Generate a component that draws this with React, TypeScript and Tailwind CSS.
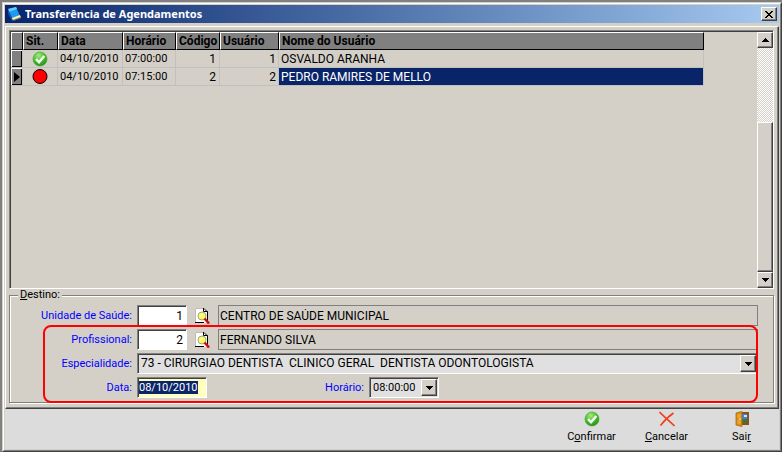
import { useEffect, useRef } from "react";
import type { ReactNode } from "react";

const columns = [
  { label: "Sit.", width: "w-[35px]" },
  { label: "Data", width: "w-[65px]" },
  { label: "Horário", width: "w-[53px]" },
  { label: "Código", width: "w-[44px]" },
  { label: "Usuário", width: "w-[59px]" },
  { label: "Nome do Usuário", width: "w-[425px]" },
];

const appointments = [
  { status: "ok", date: "04/10/2010", time: "07:00:00", code: 1, user: 1, name: "OSVALDO ARANHA", current: false },
  { status: "busy", date: "04/10/2010", time: "07:15:00", code: 2, user: 2, name: "PEDRO RAMIRES DE MELLO", current: true },
];

const raised = "border border-t-white border-l-white border-r-[#404040] border-b-[#404040] shadow-[inset_-1px_-1px_0_#808080] bg-[#d4d0c8]";
const sunken = "border border-t-[#808080] border-l-[#808080] border-r-white border-b-white shadow-[inset_1px_1px_0_#404040]";
const labelText = "w-[122px] shrink-0 text-right text-[#0000ff]";

const BookIcon = () => (
  <svg width="16" height="16" viewBox="0 0 16 16" aria-hidden="true">
    <path d="M1 3 9 1l4 9-8 3z" fill="#1c9cf0" />
    <path d="M1 3 9 1l1 2-8 3z" fill="#6cc8ff" />
    <path d="m1 3 4 9v3L1 8z" fill="#0b50b8" />
    <path d="m5 12 8-3 1 3-8 3z" fill="#fff3b0" />
    <path d="m6 14 8-3" stroke="#e8b820" />
    <path d="m5 15 9-3" stroke="#0b50b8" />
  </svg>
);

const CheckIcon = () => (
  <svg width="16" height="16" viewBox="0 0 16 16" aria-hidden="true">
    <defs>
      <radialGradient id="green" cx="40%" cy="25%" r="75%">
        <stop offset="0" stopColor="#a4ea80" />
        <stop offset=".55" stopColor="#4cc02c" />
        <stop offset="1" stopColor="#24941c" />
      </radialGradient>
    </defs>
    <circle cx="8" cy="8" r="7" fill="url(#green)" stroke="#3aa52a" strokeWidth=".6" />
    <path d="m4 8 3 3.2L12.3 5" fill="none" stroke="#fff" strokeWidth="2.4" />
  </svg>
);

const BusyIcon = () => (
  <svg width="16" height="16" viewBox="0 0 16 16" aria-hidden="true">
    <circle cx="8" cy="7.5" r="7" fill="#f00" stroke="#000" />
  </svg>
);

const CrossIcon = () => (
  <svg width="16" height="16" viewBox="0 0 16 16" aria-hidden="true">
    <path d="M.5 1 8 8.2l7.500 6.800" fill="none" stroke="#f04020" strokeWidth="1.6" />
    <path d="M14.500 2C10 5 5 10 1.500 14.500" fill="none" stroke="#f04020" strokeWidth="1.6" />
  </svg>
);

const DoorIcon = () => (
  <svg width="16" height="16" viewBox="0 0 16 16" aria-hidden="true">
    <path d="M5 1h10v13H5z" fill="#8a5020" />
    <path d="M8 3h5v5H8z" fill="#3a80f0" />
    <path d="M10 4h3v2h-3z" fill="#cfe4ff" />
    <path d="M8 8h5v4H8z" fill="#3a7a30" />
    <path d="m2 2 6-1.500v15L2 14z" fill="#d89018" stroke="#a86810" strokeWidth=".8" />
    <path d="m3.500 3.500 3-.8v4l-3 .3zM3.500 9l3 .2v4l-3-.7z" fill="#e8a838" />
    <circle cx="6" cy="8" r=".8" fill="#fff" />
  </svg>
);

const LookupIcon = () => (
  <svg width="16" height="16" viewBox="0 0 16 16" aria-hidden="true">
    <path d="M1 0h9l4 4v11H1z" fill="#fff" />
    <path d="M1.500 15V.5H10" fill="none" stroke="#c0bcb4" />
    <path d="M9.500 0v3.500h4V15M10 .5l3.500 3.500M1 14.500h9" fill="none" stroke="#000" />
    <circle cx="8" cy="8" r="4" fill="#ffff40" stroke="#a0a0a0" />
    <path d="M6 8.500 8.500 6" stroke="#fff" strokeWidth="1.500" />
    <path d="m10.500 10.500 4.500 5" stroke="#d01010" strokeWidth="2.600" />
  </svg>
);

const Arrow = ({ up = false }: { up?: boolean }) => (
  <svg width="7" height="4" viewBox="0 0 7 4" shapeRendering="crispEdges" aria-hidden="true">
    <path d={up ? "M3 0h1v1h1v1h1v1h1v1H0V3h1V2h1V1h1z" : "M0 0h7v1H6v1H5v1H4v1H3V3H2V2H1V1H0z"} />
  </svg>
);

function ComboBox({ id, value, className }: { id: string; value: string; className: string }) {
  return (
    <div className={`relative h-[21px] ${className}`}>
      <select id={id} className={`${sunken} block h-full w-full appearance-none bg-[#e0e0e0] pl-[3px] whitespace-pre outline-none`}>
        <option>{value}</option>
      </select>
      <span className={`${raised} pointer-events-none absolute top-[2px] right-[2px] bottom-[2px] flex w-4 items-center justify-center`}>
        <Arrow />
      </span>
    </div>
  );
}

function LookupRow({ id, label, code, name }: { id: string; label: string; code: string; name: string }) {
  return (
    <div className="flex h-[21px] items-center">
      <label htmlFor={id} className={labelText}>{label}</label>
      <input id={id} defaultValue={code} className={`${sunken} ml-[5px] h-full w-[50px] bg-white pr-[3px] text-right text-[12px] outline-none`} />
      <button type="button" aria-label={`Pesquisar ${label}`} className="mr-[8px] ml-[7px] shrink-0">
        <LookupIcon />
      </button>
      <input readOnly aria-label={`Nome ${label}`} value={name} className="h-full min-w-0 flex-1 border border-[#808080] px-px text-[12px] outline-none" />
    </div>
  );
}

function ActionButton({ icon, children }: { icon: ReactNode; children: ReactNode }) {
  return (
    <button type="button" className="flex w-[75px] flex-col items-center gap-[3px] text-[11px] leading-[14px]">
      {icon}
      <span>{children}</span>
    </button>
  );
}

export default function App() {
  const dateRef = useRef<HTMLInputElement>(null);

  useEffect(() => {
    dateRef.current?.focus();
    dateRef.current?.select();
  }, []);

  return (
    <div className="flex min-h-screen flex-col bg-[#808080] pt-[2px] pl-[2px] font-[Roboto,sans-serif] text-[11px] leading-[13px] text-black">
      <div className="flex flex-1 flex-col border border-t-[#d4d0c8] border-r-[#404040] border-b-[#404040] border-l-[#d4d0c8]">
        <div className="flex flex-1 flex-col border border-t-white border-r-[#808080] border-b-[#808080] border-l-white bg-[#d4d0c8] p-px">
          <header className="flex h-[18px] items-center gap-[2px] bg-linear-to-r from-[#0a246a] to-[#a6caf0] pr-[2px] pl-[2px]">
            <BookIcon />
            <h1 className="flex-1 font-['Noto_Sans',sans-serif] text-[11px] leading-[16px] font-bold text-white">Transferência de Agendamentos</h1>
            <button type="button" aria-label="Fechar" className={`${raised} flex h-[14px] w-4 items-center justify-center`}>
              <svg width="8" height="7" viewBox="0 0 8 7" shapeRendering="crispEdges" aria-hidden="true">
                <path d="M0 0h2v1h1v1h2V1h1V0h2v1H7v1H6v1H5v1h1v1h1v1h1v1H6V6H5V5H3v1H2v1H0V6h1V5h1V4h1V3H2V2H1V1H0z" />
              </svg>
            </button>
          </header>

          <main className={`${raised} mt-[3px] flex flex-1 flex-col pt-[3px] pr-[4px] pb-[5px] pl-[3px]`}>
            <section className={`${sunken} flex flex-1 p-px pr-0 pb-0`} aria-label="Agendamentos">
              <div className="min-w-0 flex-1 overflow-hidden">
                <table className="w-[693px] table-fixed border-separate border-spacing-0">
                  <thead>
                    <tr className="h-[18px] bg-[#808080] text-left text-[12px]">
                      <th className="w-[12px] border border-t-white border-r-black border-b-black border-l-white p-0" />
                      {columns.map(({ label, width }) => (
                        <th key={label} className={`${width} border border-t-white border-r-black border-b-black border-l-white p-0 pl-[2px] font-bold whitespace-nowrap`}>{label}</th>
                      ))}
                    </tr>
                  </thead>
                  <tbody>
                    {appointments.map(({ status, date, time, code, user, name, current }) => (
                      <tr key={code} className="h-[18px] *:border-r *:border-b *:border-[#c0c0c0] *:p-0 *:leading-[16px]">
                        <td className="bg-[#808080] shadow-[inset_1px_1px_0_#fff,inset_-1px_-1px_0_#000]">
                          {current && (
                            <svg className="ml-[3px]" width="6" height="10" viewBox="0 0 6 10" aria-hidden="true">
                              <path d="M0 0v10l6-5z" />
                            </svg>
                          )}
                        </td>
                        <td><div className="flex justify-center">{status === "ok" ? <CheckIcon /> : <BusyIcon />}</div></td>
                        <td><span className="pl-[2px]">{date}</span></td>
                        <td><span className="pl-[2px]">{time}</span></td>
                        <td className="text-right text-[12px]"><span className="pr-[3px]">{code}</span></td>
                        <td className="text-right text-[12px]"><span className="pr-[2px]">{user}</span></td>
                        <td className={`text-[12px] ${current ? "bg-[#0a246a] text-white" : ""}`}><span className="pl-[2px]">{name}</span></td>
                      </tr>
                    ))}
                  </tbody>
                </table>
              </div>
              <div className="flex w-4 flex-col">
                <button type="button" aria-label="Rolar para cima" className={`${raised} flex h-4 items-center justify-center`}><Arrow up /></button>
                <div className="flex-1 bg-[repeating-conic-gradient(#fff_0_25%,#d4d0c8_0_50%)] bg-[length:2px_2px]" />
                <div className={`${raised} flex-[2]`} />
                <button type="button" aria-label="Rolar para baixo" className={`${raised} flex h-4 items-center justify-center`}><Arrow /></button>
              </div>
            </section>

            <fieldset className="relative flex min-w-0 flex-col gap-[3px] border border-[#808080] pt-[4px] pr-[15px] pb-[4px] shadow-[1px_1px_0_#fff,inset_1px_1px_0_#fff]">
              <legend className="ml-[8px] bg-[#d4d0c8] px-[2px] leading-[12px]"><u>D</u>estino:</legend>
              <LookupRow id="unidade" label="Unidade de Saúde:" code="1" name="CENTRO DE SAÚDE MUNICIPAL" />
              <LookupRow id="profissional" label="Profissional:" code="2" name="FERNANDO SILVA" />
              <div className="flex h-[21px] items-center">
                <label htmlFor="especialidade" className={labelText}>Especialidade:</label>
                <ComboBox id="especialidade" value={"73 - CIRURGIAO DENTISTA\u00a0 CLINICO GERAL\u00a0 DENTISTA ODONTOLOGISTA"} className="ml-[5px] flex-1 text-[12px]" />
              </div>
              <div className="flex h-[21px] items-center">
                <label htmlFor="data" className={labelText}>Data:</label>
                <input ref={dateRef} id="data" defaultValue="08/10/2010" className={`${sunken} ml-[5px] h-full w-[70px] bg-[#ffffc0] px-px outline-none selection:bg-[#0a246a] selection:text-white`} />
                <label htmlFor="horario" className={`${labelText} ml-[35px]`}>Horário:</label>
                <ComboBox id="horario" value="08:00:00" className="ml-[5px] w-[70px]" />
              </div>
              <div className="pointer-events-none absolute right-[15px] bottom-[-1px] left-[33px] h-[78px] rounded-lg border-2 border-[#ff0000]" />
            </fieldset>
          </main>

          <footer className="flex h-10 items-start justify-end bg-[#dcdcdc] pt-[2px]">
            <ActionButton icon={<CheckIcon />}>C<u>o</u>nfirmar</ActionButton>
            <ActionButton icon={<CrossIcon />}><u>C</u>ancelar</ActionButton>
            <ActionButton icon={<DoorIcon />}>Sai<u>r</u></ActionButton>
          </footer>
        </div>
      </div>
    </div>
  );
}
